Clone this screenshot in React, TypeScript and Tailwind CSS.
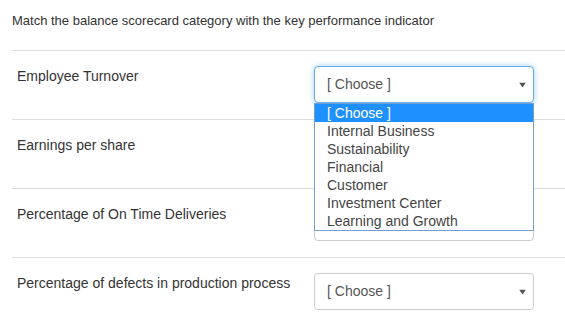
import React from 'react';

const rows = [
  'Employee Turnover',
  'Earnings per share',
  'Percentage of On Time Deliveries',
  'Percentage of defects in production process',
];

const options = [
  '[ Choose ]',
  'Internal Business',
  'Sustainability',
  'Financial',
  'Customer',
  'Investment Center',
  'Learning and Growth',
];

function Arrow() {
  return (
    <svg width="7" height="5" viewBox="0 0 7 5" className="absolute right-[7px] top-1/2 -translate-y-1/2">
      <path d="M0 0 H7 L3.5 5 Z" fill="#555" />
    </svg>
  );
}

function FakeSelect({ open }: { open?: boolean }) {
  return (
    <div className="relative w-[220px]">
      <div
        className={
          'relative h-[37px] rounded-[4px] border bg-white pl-[12px] flex items-center text-[14px] text-[#555] ' +
          (open ? 'border-[#66afe9] shadow-[0_0_6px_rgba(102,175,233,0.6)]' : 'border-[#ccc]')
        }
      >
        [ Choose ]
        <Arrow />
      </div>
      {open && (
        <ul className="absolute left-0 top-[37px] z-10 w-[220px] border border-[#7a9cd3] bg-white">
          {options.map((o, i) => (
            <li
              key={o}
              className={
                'h-[18px] leading-[18px] pl-[12px] text-[14px] ' +
                (i === 0 ? 'bg-[#1e90ff] text-white' : 'text-[#444]')
              }
            >
              {o}
            </li>
          ))}
        </ul>
      )}
    </div>
  );
}

export default function App() {
  return (
    <div className="w-[565px] h-[327px] bg-white pl-[12px] overflow-hidden" style={{ fontFamily: '"Liberation Sans", Arial, sans-serif' }}>
      <div className="h-[51px] pt-[12px] text-[13px] leading-[18px] text-[#333] border-b border-[#ddd]">
        Match the balance scorecard category with the key performance indicator
      </div>
      {rows.map((r, i) => (
        <div key={r} className={'flex pt-[15px] pb-[16px] ' + (i < rows.length - 1 ? 'border-b border-[#ddd]' : '')}>
          <div className="w-[302px] pl-[5px] text-[14px] leading-[20px] text-[#333]">{r}</div>
          <FakeSelect open={i === 0} />
        </div>
      ))}
    </div>
  );
}
